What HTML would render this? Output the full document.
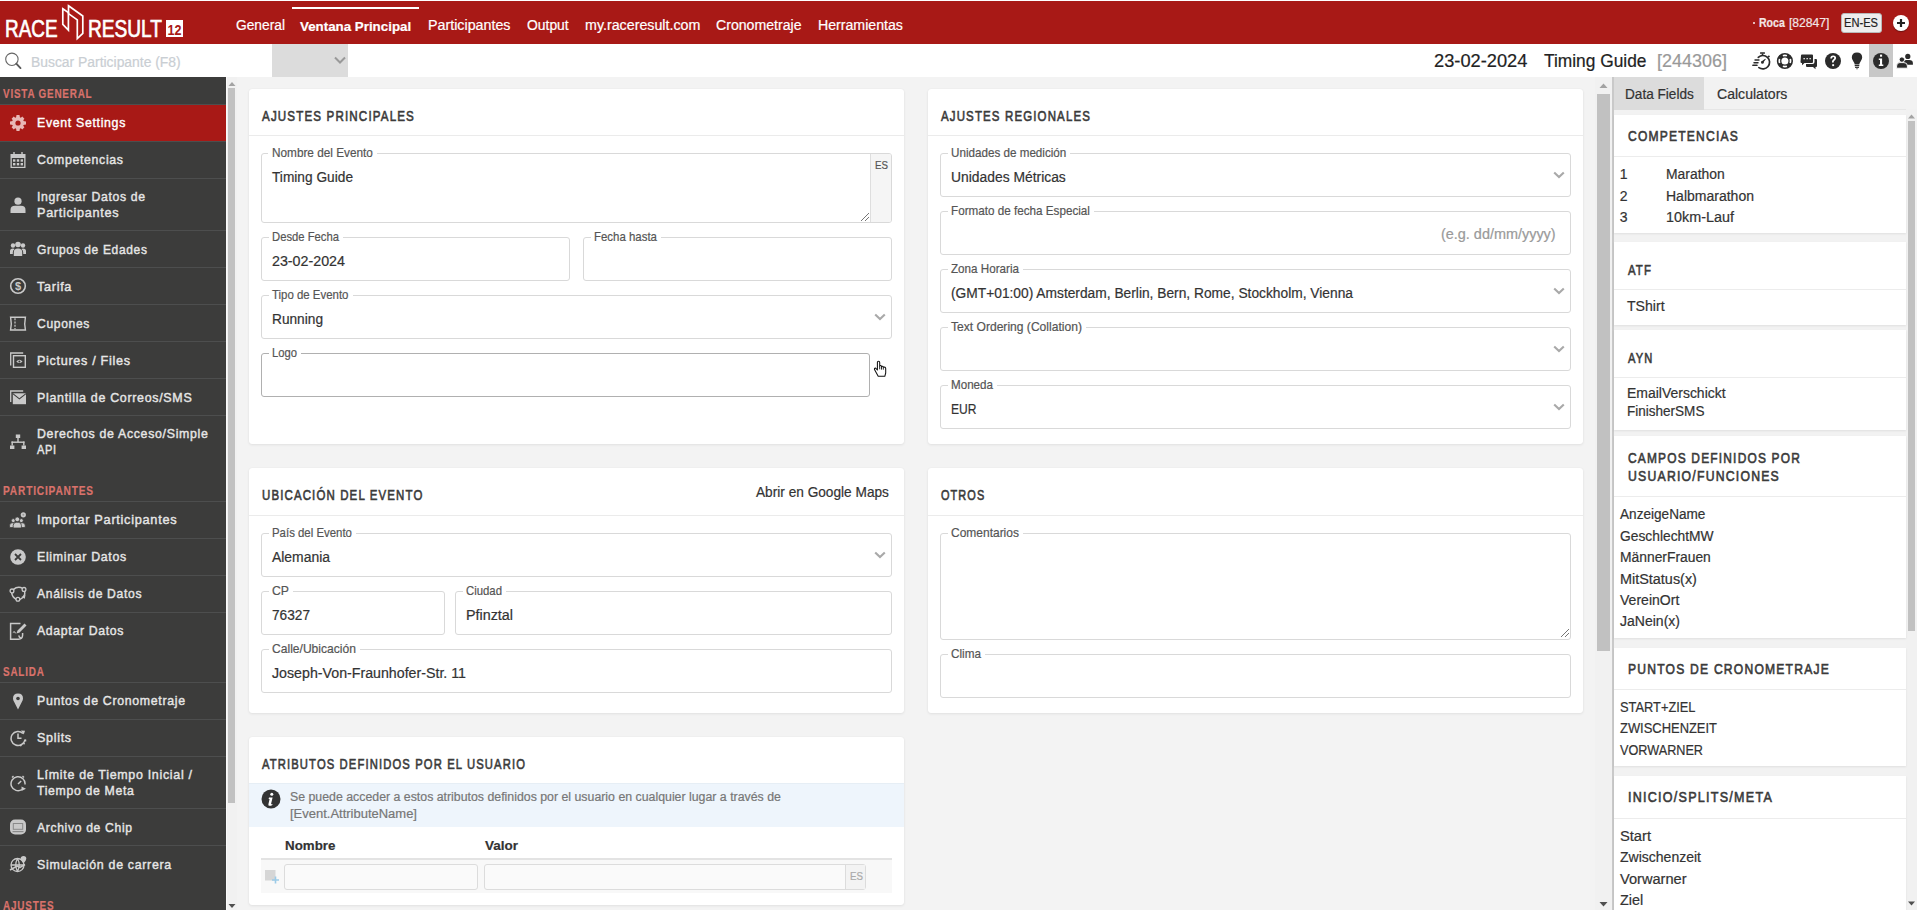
<!DOCTYPE html>
<html><head><meta charset="utf-8">
<style>
*{box-sizing:border-box;margin:0;padding:0}
html,body{width:1917px;height:910px;overflow:hidden;background:#fff;font-family:"Liberation Sans",sans-serif;color:#333}
.a{position:absolute}
.t{position:absolute;white-space:nowrap;line-height:1;transform-origin:0 0;z-index:1;-webkit-text-stroke:0.2px currentColor}
#hdr{position:absolute;left:0;top:1px;width:1917px;height:43px;background:#a81916}
#tb{position:absolute;left:0;top:44px;width:1917px;height:33px;background:#fff}
#side{position:absolute;left:0;top:77px;width:226px;height:833px;background:#3c3c3b;overflow:hidden}
#main{position:absolute;left:226px;top:77px;width:1386px;height:833px;background:#f3f3f3}
#rp{position:absolute;left:1612px;top:77px;width:305px;height:833px;background:#f2f2f2;border-left:2px solid #c9c9c9}
.nav{color:#fff;font-size:14px}
.sh{color:#d9726b;font-weight:bold;font-size:11.5px}
.si{position:absolute;left:0;width:226px;border-top:1px solid #4d4e4e}
.st{color:#e6e6e6;font-size:12.8px;font-weight:bold}
.card{position:absolute;background:#fff;border-radius:3px;box-shadow:0 1px 3px rgba(0,0,0,0.07),0 0 1px rgba(0,0,0,0.08)}
.ch{position:absolute;left:0;right:0;top:0;height:47px;border-bottom:1px solid #eaeaea}
.ct{color:#3b3b3b;font-weight:bold;font-size:13px;letter-spacing:1px}
.fb{position:absolute;border:1px solid #d9d9d9;border-radius:3px;background:#fff}
.lb{position:absolute;background:#fff;color:#555;font-size:12px;padding:0 3px;line-height:13px;white-space:nowrap}
.val{color:#333;font-size:13.7px}
</style></head><body>
<div id="main"></div>
<div class="a" style="left:1595px;top:77px;width:17px;height:833px;background:#f1f1f1"></div>
<div class="a" style="left:1597px;top:94px;width:13px;height:557px;background:#c1c1c1"></div>
<svg class="a" style="left:1598px;top:82px" width="11" height="8"><path d="M1.5 6h8l-4-4.5z" fill="#a3a3a3"/></svg>
<svg class="a" style="left:1598px;top:900px" width="11" height="8"><path d="M1.5 2h8l-4 4.5z" fill="#505050"/></svg>
<div class="card" style="left:249px;top:89px;width:655px;height:355px"></div>
<div class="a" style="left:249px;top:135px;width:655px;height:1px;background:#ebebeb"></div>
<div class="t" style="left:262.0px;top:109px;font-size:14px;color:#3b3b3b;-webkit-text-stroke:0.6px #3b3b3b;letter-spacing:1.4px;transform:scaleX(0.8268);">AJUSTES PRINCIPALES</div>
<div class="fb" style="left:261px;top:153px;width:631px;height:70px"></div>
<div class="a" style="left:870px;top:154px;width:21px;height:68px;background:#f5f5f5;border-left:1px solid #dedede;border-radius:0 2px 2px 0"></div>
<div class="t" style="left:874.6px;top:160px;font-size:10.5px;color:#555;transform:scaleX(0.9281);">ES</div>
<svg class="a" style="left:860px;top:212px" width="10" height="10"><path d="M1 9l8-8M5 9l4-4" stroke="#666" stroke-width="0.9"/></svg>
<div class="a" style="left:268px;top:151px;width:109px;height:4px;background:#fff"></div>
<div class="t" style="left:271.8px;top:147px;font-size:12.4px;color:#555;transform:scaleX(0.9515);">Nombre del Evento</div>
<div class="t" style="left:272.0px;top:170px;font-size:14px;color:#333;transform:scaleX(0.9790);">Timing Guide</div>
<div class="fb" style="left:261px;top:237px;width:309px;height:44px;border-color:#d9d9d9"></div>
<div class="a" style="left:269px;top:235px;width:74px;height:4px;background:#fff"></div>
<div class="t" style="left:271.8px;top:231px;font-size:12.4px;color:#555;transform:scaleX(0.9084);">Desde Fecha</div>
<div class="t" style="left:272.0px;top:254px;font-size:14px;color:#333;transform:scaleX(1.0193);">23-02-2024</div>
<div class="fb" style="left:583px;top:237px;width:309px;height:44px;border-color:#d9d9d9"></div>
<div class="a" style="left:591px;top:235px;width:70px;height:4px;background:#fff"></div>
<div class="t" style="left:593.8px;top:231px;font-size:12.4px;color:#555;transform:scaleX(0.9232);">Fecha hasta</div>
<div class="fb" style="left:261px;top:295px;width:631px;height:44px;border-color:#d9d9d9"></div>
<div class="a" style="left:269px;top:293px;width:83.5px;height:4px;background:#fff"></div>
<div class="t" style="left:271.8px;top:289px;font-size:12.4px;color:#555;transform:scaleX(0.9222);">Tipo de Evento</div>
<div class="t" style="left:272.0px;top:312px;font-size:14px;color:#333;transform:scaleX(0.9779);">Running</div>
<svg class="a" style="left:873.5px;top:313px" width="12" height="8" viewBox="0 0 12 8"><path d="M1.2 1.5l4.8 4.6 4.8-4.6" fill="none" stroke="#a9a9a9" stroke-width="2.1"/></svg>
<div class="fb" style="left:261px;top:353px;width:609px;height:44px;border-color:#b0b0b0"></div>
<div class="a" style="left:269px;top:351px;width:32px;height:4px;background:#fff"></div>
<div class="t" style="left:271.8px;top:347px;font-size:12.4px;color:#555;transform:scaleX(0.9063);">Logo</div>
<svg class="a" style="left:873px;top:360px" width="16" height="19" viewBox="0 0 16 19"><path d="M4.4 10V2.4Q4.4 1.2 5.55 1.2Q6.7 1.2 6.7 2.4V6Q7.6 5.1 8.5 6V6.6Q9.4 5.8 10.3 6.9V7.3Q12.6 6.6 12.7 8.6V13L11.8 16.3H5.2L1.5 9.6Q1.2 8 2.6 8.1z" fill="#fff" stroke="#111" stroke-width="1.05" stroke-linejoin="round"/><path d="M6.7 6v3.3M8.5 6.6v3M10.3 7.3v2.4" stroke="#111" stroke-width="0.9"/></svg>
<div class="card" style="left:928px;top:89px;width:655px;height:355px"></div>
<div class="a" style="left:928px;top:135px;width:655px;height:1px;background:#ebebeb"></div>
<div class="t" style="left:941.0px;top:109px;font-size:14px;color:#3b3b3b;-webkit-text-stroke:0.6px #3b3b3b;letter-spacing:1.4px;transform:scaleX(0.8191);">AJUSTES REGIONALES</div>
<div class="fb" style="left:940px;top:153px;width:631px;height:44px;border-color:#d9d9d9"></div>
<div class="a" style="left:948px;top:151px;width:122.4px;height:4px;background:#fff"></div>
<div class="t" style="left:950.8px;top:147px;font-size:12.4px;color:#555;transform:scaleX(0.9405);">Unidades de medición</div>
<div class="t" style="left:951.0px;top:170px;font-size:14px;color:#333;transform:scaleX(0.9902);">Unidades Métricas</div>
<svg class="a" style="left:1552.5px;top:171px" width="12" height="8" viewBox="0 0 12 8"><path d="M1.2 1.5l4.8 4.6 4.8-4.6" fill="none" stroke="#a9a9a9" stroke-width="2.1"/></svg>
<div class="fb" style="left:940px;top:211px;width:631px;height:44px;border-color:#d9d9d9"></div>
<div class="a" style="left:948px;top:209px;width:146px;height:4px;background:#fff"></div>
<div class="t" style="left:950.8px;top:205px;font-size:12.4px;color:#555;transform:scaleX(0.9424);">Formato de fecha Especial</div>
<div class="t" style="left:1440.5px;top:228px;font-size:13.9px;color:#9a9a9a;transform:scaleX(1.0385);">(e.g. dd/mm/yyyy)</div>
<div class="fb" style="left:940px;top:269px;width:631px;height:44px;border-color:#d9d9d9"></div>
<div class="a" style="left:948px;top:267px;width:75px;height:4px;background:#fff"></div>
<div class="t" style="left:950.8px;top:263px;font-size:12.4px;color:#555;transform:scaleX(0.9396);">Zona Horaria</div>
<div class="t" style="left:951.0px;top:286px;font-size:14px;color:#333;transform:scaleX(0.9837);">(GMT+01:00) Amsterdam, Berlin, Bern, Rome, Stockholm, Vienna</div>
<svg class="a" style="left:1552.5px;top:287px" width="12" height="8" viewBox="0 0 12 8"><path d="M1.2 1.5l4.8 4.6 4.8-4.6" fill="none" stroke="#a9a9a9" stroke-width="2.1"/></svg>
<div class="fb" style="left:940px;top:327px;width:631px;height:44px;border-color:#d9d9d9"></div>
<div class="a" style="left:948px;top:325px;width:138px;height:4px;background:#fff"></div>
<div class="t" style="left:950.8px;top:321px;font-size:12.4px;color:#555;transform:scaleX(0.9748);">Text Ordering (Collation)</div>
<svg class="a" style="left:1552.5px;top:345px" width="12" height="8" viewBox="0 0 12 8"><path d="M1.2 1.5l4.8 4.6 4.8-4.6" fill="none" stroke="#a9a9a9" stroke-width="2.1"/></svg>
<div class="fb" style="left:940px;top:385px;width:631px;height:44px;border-color:#d9d9d9"></div>
<div class="a" style="left:948px;top:383px;width:49px;height:4px;background:#fff"></div>
<div class="t" style="left:950.8px;top:379px;font-size:12.4px;color:#555;transform:scaleX(0.9372);">Moneda</div>
<div class="t" style="left:951.0px;top:402px;font-size:14px;color:#333;transform:scaleX(0.8627);">EUR</div>
<svg class="a" style="left:1552.5px;top:403px" width="12" height="8" viewBox="0 0 12 8"><path d="M1.2 1.5l4.8 4.6 4.8-4.6" fill="none" stroke="#a9a9a9" stroke-width="2.1"/></svg>
<div class="card" style="left:249px;top:468px;width:655px;height:245px"></div>
<div class="a" style="left:249px;top:515px;width:655px;height:1px;background:#ebebeb"></div>
<div class="t" style="left:262.3px;top:488px;font-size:14px;color:#3b3b3b;-webkit-text-stroke:0.6px #3b3b3b;letter-spacing:1.4px;transform:scaleX(0.8173);">UBICACIÓN DEL EVENTO</div>
<div class="t" style="left:756.1px;top:486px;font-size:13.9px;color:#333;transform:scaleX(0.9837);">Abrir en Google Maps</div>
<div class="fb" style="left:261px;top:533px;width:631px;height:44px;border-color:#d9d9d9"></div>
<div class="a" style="left:269px;top:531px;width:87px;height:4px;background:#fff"></div>
<div class="t" style="left:271.8px;top:527px;font-size:12.4px;color:#555;transform:scaleX(0.9211);">País del Evento</div>
<div class="t" style="left:272.0px;top:550px;font-size:14px;color:#333;transform:scaleX(0.9937);">Alemania</div>
<svg class="a" style="left:873.5px;top:551px" width="12" height="8" viewBox="0 0 12 8"><path d="M1.2 1.5l4.8 4.6 4.8-4.6" fill="none" stroke="#a9a9a9" stroke-width="2.1"/></svg>
<div class="fb" style="left:261px;top:591px;width:184px;height:44px;border-color:#d9d9d9"></div>
<div class="a" style="left:269px;top:589px;width:24px;height:4px;background:#fff"></div>
<div class="t" style="left:271.8px;top:585px;font-size:12.4px;color:#555;transform:scaleX(0.9869);">CP</div>
<div class="t" style="left:272.0px;top:608px;font-size:14px;color:#333;transform:scaleX(0.9761);">76327</div>
<div class="fb" style="left:455px;top:591px;width:437px;height:44px;border-color:#d9d9d9"></div>
<div class="a" style="left:463px;top:589px;width:43px;height:4px;background:#fff"></div>
<div class="t" style="left:465.8px;top:585px;font-size:12.4px;color:#555;transform:scaleX(0.9161);">Ciudad</div>
<div class="t" style="left:466.0px;top:608px;font-size:14px;color:#333;transform:scaleX(1.0237);">Pfinztal</div>
<div class="fb" style="left:261px;top:649px;width:631px;height:44px;border-color:#d9d9d9"></div>
<div class="a" style="left:269px;top:647px;width:91px;height:4px;background:#fff"></div>
<div class="t" style="left:271.8px;top:643px;font-size:12.4px;color:#555;transform:scaleX(0.9750);">Calle/Ubicación</div>
<div class="t" style="left:272.0px;top:666px;font-size:14px;color:#333;transform:scaleX(1.0147);">Joseph-Von-Fraunhofer-Str. 11</div>
<div class="card" style="left:928px;top:468px;width:655px;height:245px"></div>
<div class="a" style="left:928px;top:515px;width:655px;height:1px;background:#ebebeb"></div>
<div class="t" style="left:941.2px;top:488px;font-size:14px;color:#3b3b3b;-webkit-text-stroke:0.6px #3b3b3b;letter-spacing:1.4px;transform:scaleX(0.7802);">OTROS</div>
<div class="fb" style="left:940px;top:533px;width:631px;height:107px;border-color:#d9d9d9"></div>
<div class="a" style="left:948px;top:531px;width:75px;height:4px;background:#fff"></div>
<div class="t" style="left:950.8px;top:527px;font-size:12.4px;color:#555;transform:scaleX(0.9673);">Comentarios</div>
<svg class="a" style="left:1560px;top:628px" width="10" height="10"><path d="M1 9l8-8M5 9l4-4" stroke="#666" stroke-width="0.9"/></svg>
<div class="fb" style="left:940px;top:654px;width:631px;height:44px;border-color:#d9d9d9"></div>
<div class="a" style="left:948px;top:652px;width:37px;height:4px;background:#fff"></div>
<div class="t" style="left:950.8px;top:648px;font-size:12.4px;color:#555;transform:scaleX(0.9466);">Clima</div>
<div class="card" style="left:249px;top:737px;width:655px;height:168px"></div>
<div class="t" style="left:262.0px;top:757px;font-size:14px;color:#3b3b3b;-webkit-text-stroke:0.6px #3b3b3b;letter-spacing:1.4px;transform:scaleX(0.8026);">ATRIBUTOS DEFINIDOS POR EL USUARIO</div>
<div class="a" style="left:249px;top:783px;width:655px;height:44px;background:#eef5fc;border-top:1px solid #e6eef5"></div>
<svg class="a" style="left:261px;top:789px" width="20" height="20" viewBox="0 0 20 20"><circle cx="10" cy="10" r="9.5" fill="#333"/><circle cx="10.8" cy="5.3" r="1.5" fill="#fff"/><path d="M8 8.6h3.6l-1.5 6.2q-.1.6.6.4l.8-.3-.2 1q-1.4.9-2.7.9-1.6-.1-1.2-1.6l1.2-5.2-1 .1z" fill="#fff"/></svg>
<div class="t" style="left:289.7px;top:791px;font-size:12.3px;color:#777;transform:scaleX(1.0029);">Se puede acceder a estos atributos definidos por el usuario en cualquier lugar a través de</div>
<div class="t" style="left:289.7px;top:808px;font-size:12.3px;color:#777;transform:scaleX(1.0555);">[Event.AttributeName]</div>
<div class="t" style="left:285.4px;top:839px;font-size:13.5px;color:#333;font-weight:bold;transform:scaleX(0.9881);">Nombre</div>
<div class="t" style="left:484.8px;top:839px;font-size:13.5px;color:#333;font-weight:bold;transform:scaleX(0.9994);">Valor</div>
<div class="a" style="left:261px;top:858px;width:631px;height:2px;background:#e3e3e3"></div>
<div class="a" style="left:261px;top:860px;width:631px;height:33px;background:#f8f8f8"></div>
<div class="a" style="left:284px;top:864px;width:194px;height:26px;background:#fafafa;border:1px solid #dcdcdc;border-radius:3px"></div>
<div class="a" style="left:484px;top:864px;width:382px;height:26px;background:#fafafa;border:1px solid #dcdcdc;border-radius:3px"></div>
<div class="a" style="left:845px;top:865px;width:20px;height:24px;background:#f3f3f3;border-left:1px solid #dcdcdc"></div>
<div class="t" style="left:849.5px;top:871px;font-size:10.5px;color:#aaa;transform:scaleX(0.9281);">ES</div>
<svg class="a" style="left:264px;top:869px" width="16" height="16" viewBox="0 0 16 16"><rect x="1" y="1" width="10.5" height="10.5" fill="#d6d6d6"/><path d="M11.5 7.5v7M8 11h7" stroke="#9ccbe8" stroke-width="1.6"/></svg>
<div id="rp"></div>
<div class="a" style="left:1614px;top:77px;width:90px;height:33px;background:#dcdcdc"></div>
<div class="a" style="left:1704px;top:109px;width:213px;height:1px;background:#e6e6e6"></div>
<div class="t" style="left:1624.9px;top:87px;font-size:14px;color:#333;transform:scaleX(0.9716);">Data Fields</div>
<div class="t" style="left:1717.0px;top:87px;font-size:14px;color:#333;transform:scaleX(1.0053);">Calculators</div>
<div class="a" style="left:1906px;top:109px;width:11px;height:801px;background:#f1f1f1"></div>
<div class="a" style="left:1908px;top:121px;width:6.5px;height:510px;background:#c1c1c1"></div>
<svg class="a" style="left:1907px;top:113px" width="9" height="7"><path d="M1 5.5h7l-3.5-4z" fill="#a3a3a3"/></svg>
<svg class="a" style="left:1907px;top:900px" width="9" height="7"><path d="M1 1.5h7l-3.5 4z" fill="#505050"/></svg>
<div class="a" style="left:1614px;top:115px;width:292px;height:118px;background:#fff;box-shadow:0 1px 2px rgba(0,0,0,0.08)"></div>
<div class="a" style="left:1614px;top:156px;width:292px;height:1px;background:#ececec"></div>
<div class="t" style="left:1627.7px;top:129px;font-size:14px;color:#3b3b3b;-webkit-text-stroke:0.6px #3b3b3b;letter-spacing:1.4px;transform:scaleX(0.8617);">COMPETENCIAS</div>
<div class="t" style="left:1619.8px;top:167px;font-size:14px;color:#333;">1</div>
<div class="t" style="left:1666.0px;top:167px;font-size:14px;color:#333;transform:scaleX(0.9924);">Marathon</div>
<div class="t" style="left:1619.8px;top:189px;font-size:14px;color:#333;">2</div>
<div class="t" style="left:1666.0px;top:189px;font-size:14px;color:#333;transform:scaleX(1.0007);">Halbmarathon</div>
<div class="t" style="left:1619.8px;top:210px;font-size:14px;color:#333;">3</div>
<div class="t" style="left:1666.0px;top:210px;font-size:14px;color:#333;transform:scaleX(1.0265);">10km-Lauf</div>
<div class="a" style="left:1614px;top:242px;width:292px;height:83px;background:#fff;box-shadow:0 1px 2px rgba(0,0,0,0.08)"></div>
<div class="a" style="left:1614px;top:289px;width:292px;height:1px;background:#ececec"></div>
<div class="t" style="left:1627.7px;top:263px;font-size:14px;color:#3b3b3b;-webkit-text-stroke:0.6px #3b3b3b;letter-spacing:1.4px;transform:scaleX(0.8107);">ATF</div>
<div class="t" style="left:1626.8px;top:299px;font-size:14px;color:#333;transform:scaleX(1.0070);">TShirt</div>
<div class="a" style="left:1614px;top:330px;width:292px;height:100px;background:#fff;box-shadow:0 1px 2px rgba(0,0,0,0.08)"></div>
<div class="a" style="left:1614px;top:377px;width:292px;height:1px;background:#ececec"></div>
<div class="t" style="left:1627.7px;top:351px;font-size:14px;color:#3b3b3b;-webkit-text-stroke:0.6px #3b3b3b;letter-spacing:1.4px;transform:scaleX(0.7950);">AYN</div>
<div class="t" style="left:1626.8px;top:386px;font-size:14px;color:#333;transform:scaleX(0.9979);">EmailVerschickt</div>
<div class="t" style="left:1626.8px;top:404px;font-size:14px;color:#333;transform:scaleX(0.9659);">FinisherSMS</div>
<div class="a" style="left:1614px;top:436px;width:292px;height:202px;background:#fff;box-shadow:0 1px 2px rgba(0,0,0,0.08)"></div>
<div class="a" style="left:1614px;top:496px;width:292px;height:1px;background:#ececec"></div>
<div class="t" style="left:1627.7px;top:451px;font-size:14px;color:#3b3b3b;-webkit-text-stroke:0.6px #3b3b3b;letter-spacing:1.4px;transform:scaleX(0.8521);">CAMPOS DEFINIDOS POR</div>
<div class="t" style="left:1627.7px;top:469px;font-size:14px;color:#3b3b3b;-webkit-text-stroke:0.6px #3b3b3b;letter-spacing:1.4px;transform:scaleX(0.8739);">USUARIO/FUNCIONES</div>
<div class="t" style="left:1619.8px;top:507px;font-size:14px;color:#333;transform:scaleX(0.9711);">AnzeigeName</div>
<div class="t" style="left:1619.8px;top:529px;font-size:14px;color:#333;transform:scaleX(0.9862);">GeschlechtMW</div>
<div class="t" style="left:1619.8px;top:550px;font-size:14px;color:#333;transform:scaleX(0.9888);">MännerFrauen</div>
<div class="t" style="left:1619.8px;top:572px;font-size:14px;color:#333;transform:scaleX(1.0298);">MitStatus(x)</div>
<div class="t" style="left:1619.8px;top:593px;font-size:14px;color:#333;transform:scaleX(1.0027);">VereinOrt</div>
<div class="t" style="left:1619.8px;top:614px;font-size:14px;color:#333;transform:scaleX(1.0016);">JaNein(x)</div>
<div class="a" style="left:1614px;top:648px;width:292px;height:118px;background:#fff;box-shadow:0 1px 2px rgba(0,0,0,0.08)"></div>
<div class="a" style="left:1614px;top:689px;width:292px;height:1px;background:#ececec"></div>
<div class="t" style="left:1627.7px;top:662px;font-size:14px;color:#3b3b3b;-webkit-text-stroke:0.6px #3b3b3b;letter-spacing:1.4px;transform:scaleX(0.8649);">PUNTOS DE CRONOMETRAJE</div>
<div class="t" style="left:1619.8px;top:700px;font-size:14px;color:#333;transform:scaleX(0.9169);">START+ZIEL</div>
<div class="t" style="left:1619.8px;top:721px;font-size:14px;color:#333;transform:scaleX(0.9238);">ZWISCHENZEIT</div>
<div class="t" style="left:1619.8px;top:743px;font-size:14px;color:#333;transform:scaleX(0.9043);">VORWARNER</div>
<div class="a" style="left:1614px;top:776px;width:292px;height:144px;background:#fff;box-shadow:0 1px 2px rgba(0,0,0,0.08)"></div>
<div class="a" style="left:1614px;top:818px;width:292px;height:1px;background:#ececec"></div>
<div class="t" style="left:1627.7px;top:790px;font-size:14px;color:#3b3b3b;-webkit-text-stroke:0.6px #3b3b3b;letter-spacing:1.4px;transform:scaleX(0.8959);">INICIO/SPLITS/META</div>
<div class="t" style="left:1619.8px;top:829px;font-size:14px;color:#333;transform:scaleX(1.0485);">Start</div>
<div class="t" style="left:1619.8px;top:850px;font-size:14px;color:#333;transform:scaleX(1.0010);">Zwischenzeit</div>
<div class="t" style="left:1619.8px;top:872px;font-size:14px;color:#333;transform:scaleX(1.0437);">Vorwarner</div>
<div class="t" style="left:1619.8px;top:893px;font-size:14px;color:#333;transform:scaleX(1.0284);">Ziel</div>
<div id="hdr">
<svg class="a" style="left:0;top:-1px" width="200" height="44" viewBox="0 0 200 44">
<text x="5" y="37" fill="#fff" font-family="Liberation Sans" font-size="23.5" stroke="#fff" stroke-width="0.7" textLength="52.5" lengthAdjust="spacingAndGlyphs">RACE</text>
<g fill="none" stroke="#fff" stroke-width="1.7" stroke-linejoin="miter">
<polygon points="62.8,8.8 68.4,12.6 68.4,30.2 62.8,24.4"/>
<polygon points="68.5,5.8 82.8,16 82.8,33.4 77.3,38.6 77.3,19.9 68.5,13.6"/>
</g>
<text x="88" y="37" fill="#fff" font-family="Liberation Sans" font-size="23.5" stroke="#fff" stroke-width="0.7" textLength="74" lengthAdjust="spacingAndGlyphs">RESULT</text>
<rect x="166" y="20" width="17" height="17" fill="#fff"/>
<text x="167.5" y="34.5" fill="#a81916" font-family="Liberation Sans" font-size="15" font-weight="bold" textLength="14" lengthAdjust="spacingAndGlyphs">12</text>
</svg>
<div class="a" style="left:292px;top:6px;width:127px;height:2px;background:#fff"></div>
<div class="t" style="left:235.7px;top:17px;font-size:14px;color:#fff;transform:scaleX(0.9838);">General</div>
<div class="t" style="left:300.4px;top:19px;font-size:13.6px;color:#fff;font-weight:bold;transform:scaleX(0.9808);">Ventana Principal</div>
<div class="t" style="left:427.7px;top:17px;font-size:14px;color:#fff;transform:scaleX(1.0194);">Participantes</div>
<div class="t" style="left:526.5px;top:17px;font-size:14px;color:#fff;transform:scaleX(0.9922);">Output</div>
<div class="t" style="left:584.6px;top:17px;font-size:14px;color:#fff;transform:scaleX(1.0183);">my.raceresult.com</div>
<div class="t" style="left:716.4px;top:17px;font-size:14px;color:#fff;transform:scaleX(1.0081);">Cronometraje</div>
<div class="t" style="left:818.3px;top:17px;font-size:14px;color:#fff;transform:scaleX(1.0103);">Herramientas</div>
<div class="t" style="left:1759.0px;top:16px;font-size:12.6px;color:#f3e6e6;font-weight:bold;transform:scaleX(0.8373);">Roca</div>
<div class="t" style="left:1788.5px;top:16px;font-size:12.6px;color:#f3e6e6;transform:scaleX(0.9634);">[82847]</div>
<div class="t" style="left:1844.3px;top:16px;font-size:12.4px;color:#222;transform:scaleX(0.8971);">EN-ES</div>
<div class="a" style="left:1753px;top:21px;width:2px;height:2px;background:#e6b9b8"></div>
<div class="a" style="left:1840.5px;top:11.5px;width:41px;height:20px;background:#eeeeee;border:1px solid #b9b9b9;border-radius:3px"></div>
<div class="a" style="left:1893px;top:14px;width:16px;height:16px;border-radius:50%;background:#fff;box-shadow:0 1px 1px rgba(0,0,0,.35)"></div>
<svg class="a" style="left:1895px;top:16px" width="12" height="12" viewBox="0 0 12 12"><path d="M6 2v8M2 6h8" stroke="#222" stroke-width="2.2"/></svg>
</div>
<div id="tb">
<div class="t" style="left:30.7px;top:11px;font-size:14px;color:#c9ced3;transform:scaleX(0.9917);">Buscar Participante (F8)</div>
<div class="t" style="left:1434.2px;top:9px;font-size:17.8px;color:#222;transform:scaleX(1.0268);">23-02-2024</div>
<div class="t" style="left:1544.4px;top:9px;font-size:17.8px;color:#222;transform:scaleX(0.9753);">Timing Guide</div>
<div class="t" style="left:1657.0px;top:9px;font-size:17.8px;color:#999;transform:scaleX(1.0103);">[244306]</div>
<svg class="a" style="left:0;top:0" width="30" height="33" viewBox="0 44 30 33"><circle cx="11.9" cy="59.3" r="6.2" fill="none" stroke="#666" stroke-width="1.1"/><path d="M16.3 63.7l4.2 4.4" stroke="#5a5a5a" stroke-width="1.9" stroke-linecap="round"/></svg>
<div class="a" style="left:272px;top:0;width:76px;height:33px;background:#dcdcdc"></div>
<svg class="a" style="left:334px;top:12px" width="12" height="8" viewBox="0 0 12 8"><path d="M1 1.5l5 5 5-5" fill="none" stroke="#999" stroke-width="2"/></svg>
<div class="a" style="left:1869px;top:0;width:24px;height:33px;background:#c8c8c8"></div>
<svg class="a" style="left:1740px;top:0" width="177" height="33" viewBox="1740 44 177 33">
<g fill="#2b2b2b">
<!-- stopwatch -->
<path d="M1758.3 57.3A6.7 6.7 0 1 1 1758.9 67.6" fill="none" stroke="#2b2b2b" stroke-width="1.7" stroke-linecap="round"/>
<rect x="1760" y="52.2" width="5" height="1.6" rx="0.5"/>
<rect x="1761.7" y="53.5" width="1.6" height="2.5"/>
<path d="M1767.6 56.6l1.3-1.3 1.1 1.1-1.3 1.3z"/>
<path d="M1761.4 61.6l3.9-2.9 0.5 0.5-2.9 3.9z"/>
<circle cx="1762.4" cy="62.4" r="1.4"/>
<rect x="1754.3" y="59.2" width="5.4" height="1.5" rx="0.7"/>
<rect x="1753.3" y="61.9" width="5.4" height="1.5" rx="0.7"/>
<rect x="1752.2" y="64.6" width="5.5" height="1.5" rx="0.7"/>
<!-- lifebuoy -->
<circle cx="1784.9" cy="61" r="7.3" fill="none" stroke="#2b2b2b" stroke-width="1.6"/>
<circle cx="1784.9" cy="61" r="4.2" fill="none" stroke="#2b2b2b" stroke-width="1.3"/>
<path d="M1790.31 63.08A5.8 5.8 0 0 1 1786.98 66.41M1782.82 66.41A5.8 5.8 0 0 1 1779.49 63.08M1779.49 58.92A5.8 5.8 0 0 1 1782.82 55.59M1786.98 55.59A5.8 5.8 0 0 1 1790.31 58.92" fill="none" stroke="#2b2b2b" stroke-width="3.4"/>
<!-- chat -->
<path d="M1801 55.5q0-1 1-1h10q1 0 1 1v6.5q0 1-1 1h-7.5l-2.5 2.2v-2.2h-0.5q-1 0-1-1z"/>
<path d="M1814.5 59h1.5q1 0 1 1v6q0 1-1 1h-0.5v2.2l-2.5-2.2h-6q-1 0-1-1v-2h6.5q2 0 2-2z"/>
<g fill="#fff"><rect x="1803.5" y="58" width="1.3" height="1.3"/><rect x="1806.5" y="58" width="1.3" height="1.3"/><rect x="1809.5" y="58" width="1.3" height="1.3"/></g>
<!-- question -->
<circle cx="1833" cy="61" r="8"/>
<path d="M1830.3 58.6q0-3.2 2.9-3.2q2.9 0 2.9 2.6q0 1.5-1.5 2.4q-0.9 0.6-0.9 1.7v0.5h-1.7v-0.8q0-1.5 1.2-2.3q1.1-0.7 1.1-1.5q0-1.1-1.1-1.1q-1.2 0-1.2 1.7z" fill="#fff"/>
<rect x="1832.2" y="64.2" width="1.9" height="1.9" fill="#fff"/>
<!-- bulb -->
<path d="M1857 52.5q5 0 5.2 4.8q0 2.2-1.6 4.2q-1.2 1.5-1.3 3h-4.6q-0.1-1.5-1.3-3q-1.6-2-1.6-4.2q0.2-4.8 5.2-4.8z"/>
<rect x="1854.7" y="65" width="4.6" height="1.2"/>
<rect x="1855" y="66.8" width="4" height="1.1"/>
<path d="M1855.8 68.5h2.4l-1.2 1.1z"/>
<!-- info -->
<circle cx="1881" cy="61" r="8"/>
<g fill="#fff"><rect x="1880" y="54.6" width="2.1" height="2.1"/><path d="M1878.8 58.6h3.3v6h1.2v1.5h-4.5v-1.5h1.2v-4.5h-1.2z"/></g>
<!-- users -->
<circle cx="1907.8" cy="56.4" r="2.6"/>
<path d="M1903.5 64.8v-1.8q0-2.9 2.9-2.9h2.8q3.7 0 3.7 2.9v1.8z"/>
<circle cx="1901.9" cy="59.6" r="2.7" stroke="#fff" stroke-width="0.9"/>
<path d="M1896.6 68.2v-2.2q0-3.4 3.2-3.4h4.2q3.4 0 3.4 3.4v2.2z" stroke="#fff" stroke-width="0.9"/>
</g></svg>
</div>

<div id="side">
<div class="t" style="left:3.3px;top:11px;font-size:12.4px;color:#d9726b;font-weight:bold;letter-spacing:1.0px;transform:scaleX(0.7976);">VISTA GENERAL</div>
<div class="si" style="top:27px;height:37px;background:#a81916;"></div>
<div class="t" style="left:36.6px;top:40px;font-size:12.8px;color:#fff;letter-spacing:0.7px;transform:scaleX(0.9638);-webkit-text-stroke:0.4px #fff;">Event Settings</div>
<svg class="a" style="left:9px;top:37.0px" width="18" height="18" viewBox="0 0 18 18"><g fill="#e8b8b6"><circle cx="9" cy="9" r="6"/><path d="M7.5 1h3l.5 3h-4zM7.5 17h3l.5-3h-4zM1 7.5v3l3 .5v-4zM17 7.5v3l-3 .5v-4z"/><path d="M2.6 4.7l2.1-2.1 2.3 1.8-2.6 2.6zM13.3 15.4l2.1-2.1-1.8-2.3-2.6 2.6zM2.6 13.3l2.1 2.1 2.3-1.8-2.6-2.6zM13.3 2.6l2.1 2.1-1.8 2.3-2.6-2.6z"/></g><circle cx="9" cy="9" r="2.6" fill="#a81916"/></svg>
<div class="si" style="top:64px;height:37px;"></div>
<div class="t" style="left:36.6px;top:77px;font-size:12.8px;color:#e6e6e6;letter-spacing:0.7px;transform:scaleX(0.9610);-webkit-text-stroke:0.4px #e6e6e6;">Competencias</div>
<svg class="a" style="left:9px;top:74.0px" width="18" height="18" viewBox="0 0 18 18"><rect x="1.5" y="3" width="15" height="14" fill="#c9c9c9"/><rect x="2.8" y="7" width="12.4" height="8.8" fill="#3c3c3b"/><g fill="#c9c9c9"><rect x="4" y="8.3" width="2.4" height="2.4"/><rect x="7.8" y="8.3" width="2.4" height="2.4"/><rect x="11.6" y="8.3" width="2.4" height="2.4"/><rect x="4" y="12" width="2.4" height="2.4"/><rect x="7.8" y="12" width="2.4" height="2.4"/><rect x="11.6" y="12" width="2.4" height="2.4"/><rect x="4.3" y="1" width="1.4" height="3"/><rect x="12.3" y="1" width="1.4" height="3"/></g></svg>
<div class="si" style="top:101px;height:52px;"></div>
<div class="t" style="left:36.6px;top:114px;font-size:12.8px;color:#e6e6e6;letter-spacing:0.7px;transform:scaleX(0.9574);-webkit-text-stroke:0.4px #e6e6e6;">Ingresar Datos de</div>
<div class="t" style="left:36.6px;top:130px;font-size:12.8px;color:#e6e6e6;letter-spacing:0.7px;transform:scaleX(0.9892);-webkit-text-stroke:0.4px #e6e6e6;">Participantes</div>
<svg class="a" style="left:9px;top:118.5px" width="18" height="18" viewBox="0 0 18 18"><g fill="#c9c9c9"><circle cx="9" cy="5.2" r="3.6"/><path d="M1.5 17v-3q0-4.2 4.5-4.2h6q4.5 0 4.5 4.2v3z"/></g></svg>
<div class="si" style="top:153px;height:37px;"></div>
<div class="t" style="left:36.6px;top:167px;font-size:12.8px;color:#e6e6e6;letter-spacing:0.7px;transform:scaleX(0.9378);-webkit-text-stroke:0.4px #e6e6e6;">Grupos de Edades</div>
<svg class="a" style="left:9px;top:163.0px" width="18" height="18" viewBox="0 0 18 18"><g fill="#c9c9c9"><circle cx="9" cy="4.5" r="2.8"/><circle cx="4" cy="5.5" r="2.2"/><circle cx="14" cy="5.5" r="2.2"/><path d="M4.8 16v-4q0-3.5 4.2-3.5t4.2 3.5v4z"/><path d="M1 14v-3q0-2.5 3-2.5 1 0 1.6.4-1.8 1.3-1.8 3.6v1.5z"/><path d="M17 14v-3q0-2.5-3-2.5-1 0-1.6.4 1.8 1.3 1.8 3.6v1.5z"/></g></svg>
<div class="si" style="top:190px;height:37px;"></div>
<div class="t" style="left:36.6px;top:204px;font-size:12.8px;color:#e6e6e6;letter-spacing:0.7px;transform:scaleX(0.9887);-webkit-text-stroke:0.4px #e6e6e6;">Tarifa</div>
<svg class="a" style="left:9px;top:200.0px" width="18" height="18" viewBox="0 0 18 18"><circle cx="9" cy="9" r="7.3" fill="none" stroke="#c9c9c9" stroke-width="1.6"/><text x="9" y="13" text-anchor="middle" font-family="Liberation Sans" font-weight="bold" font-size="11" fill="#c9c9c9">$</text></svg>
<div class="si" style="top:227px;height:37px;"></div>
<div class="t" style="left:36.6px;top:241px;font-size:12.8px;color:#e6e6e6;letter-spacing:0.7px;transform:scaleX(0.9441);-webkit-text-stroke:0.4px #e6e6e6;">Cupones</div>
<svg class="a" style="left:9px;top:237.0px" width="18" height="18" viewBox="0 0 18 18"><path d="M1.6 3.2H16.4Q15.1 9.6 16.4 16H1.6Q2.9 9.6 1.6 3.2z" fill="none" stroke="#c9c9c9" stroke-width="1.4"/><path d="M6 4.2v11" stroke="#c9c9c9" stroke-width="1.2" stroke-dasharray="2 1.3"/></svg>
<div class="si" style="top:264px;height:37px;"></div>
<div class="t" style="left:36.6px;top:278px;font-size:12.8px;color:#e6e6e6;letter-spacing:0.7px;transform:scaleX(0.9849);-webkit-text-stroke:0.4px #e6e6e6;">Pictures / Files</div>
<svg class="a" style="left:9px;top:274.0px" width="18" height="18" viewBox="0 0 18 18"><path d="M1.7 14.5v-12.5h12.5" fill="none" stroke="#c9c9c9" stroke-width="1.3"/><rect x="4.5" y="4.7" width="11.8" height="11.6" fill="none" stroke="#c9c9c9" stroke-width="1.4"/><path d="M7.3 10.4q3.1-3.4 6.2 0q-3.1 3.4-6.2 0z" fill="#c9c9c9"/><circle cx="10.4" cy="10.4" r="1" fill="#3c3c3b"/></svg>
<div class="si" style="top:301px;height:37px;"></div>
<div class="t" style="left:36.6px;top:315px;font-size:12.8px;color:#e6e6e6;letter-spacing:0.7px;transform:scaleX(0.9725);-webkit-text-stroke:0.4px #e6e6e6;">Plantilla de Correos/SMS</div>
<svg class="a" style="left:9px;top:311.0px" width="18" height="18" viewBox="0 0 18 18"><path d="M1.7 14v-11h12.5" fill="none" stroke="#c9c9c9" stroke-width="1.3"/><rect x="3.8" y="5.3" width="13.2" height="10.9" fill="#c9c9c9"/><path d="M3.8 5.6l6.6 5.3 6.6-5.3" fill="none" stroke="#3c3c3b" stroke-width="1.1"/></svg>
<div class="si" style="top:338px;height:52px;"></div>
<div class="t" style="left:36.6px;top:351px;font-size:12.8px;color:#e6e6e6;letter-spacing:0.7px;transform:scaleX(0.9663);-webkit-text-stroke:0.4px #e6e6e6;">Derechos de Acceso/Simple</div>
<div class="t" style="left:36.6px;top:367px;font-size:12.8px;color:#e6e6e6;letter-spacing:0.7px;transform:scaleX(0.8666);-webkit-text-stroke:0.4px #e6e6e6;">API</div>
<svg class="a" style="left:9px;top:355.5px" width="18" height="18" viewBox="0 0 18 18"><g fill="#c9c9c9"><rect x="6.8" y="1.5" width="4.4" height="3.5"/><rect x="1" y="12.5" width="4.4" height="3.5"/><rect x="12.6" y="12.5" width="4.4" height="3.5"/><rect x="8.3" y="5" width="1.4" height="4"/><rect x="2.5" y="8.5" width="13" height="1.4"/><rect x="2.5" y="8.5" width="1.4" height="4"/><rect x="14.1" y="8.5" width="1.4" height="4"/></g></svg>
<div class="t" style="left:3.3px;top:408px;font-size:12.4px;color:#d9726b;font-weight:bold;letter-spacing:1.0px;transform:scaleX(0.8194);">PARTICIPANTES</div>
<div class="si" style="top:424px;height:37px;"></div>
<div class="t" style="left:36.6px;top:437px;font-size:12.8px;color:#e6e6e6;letter-spacing:0.7px;transform:scaleX(0.9978);-webkit-text-stroke:0.4px #e6e6e6;">Importar Participantes</div>
<svg class="a" style="left:9px;top:434.0px" width="18" height="18" viewBox="0 0 18 18"><g fill="#c9c9c9" stroke="#3c3c3b" stroke-width="0.8"><circle cx="4.3" cy="9.6" r="2"/><circle cx="12.3" cy="9.6" r="2"/><path d="M0.6 16.6v-2.2q0-2.6 2.6-2.6h2.4q2.6 0 2.6 2.6v2.2z"/><path d="M8.6 16.6v-2.2q0-2.6 2.6-2.6h2.4q2.6 0 2.6 2.6v2.2z"/><circle cx="8.3" cy="8.3" r="2.4"/><path d="M4.2 17v-2.6q0-3.1 3.1-3.1h2q3.1 0 3.1 3.1v2.6z"/></g><circle cx="14.3" cy="3.8" r="2.6" fill="#c9c9c9"/><circle cx="14.3" cy="3.8" r="1" fill="#9a9a9a"/></svg>
<div class="si" style="top:461px;height:37px;"></div>
<div class="t" style="left:36.6px;top:474px;font-size:12.8px;color:#e6e6e6;letter-spacing:0.7px;transform:scaleX(0.9664);-webkit-text-stroke:0.4px #e6e6e6;">Eliminar Datos</div>
<svg class="a" style="left:9px;top:471.0px" width="18" height="18" viewBox="0 0 18 18"><circle cx="9" cy="9" r="7.8" fill="#c9c9c9"/><path d="M6 6l6 6M12 6l-6 6" stroke="#3c3c3b" stroke-width="1.8"/></svg>
<div class="si" style="top:498px;height:37px;"></div>
<div class="t" style="left:36.6px;top:511px;font-size:12.8px;color:#e6e6e6;letter-spacing:0.7px;transform:scaleX(0.9495);-webkit-text-stroke:0.4px #e6e6e6;">Análisis de Datos</div>
<svg class="a" style="left:9px;top:508.0px" width="18" height="18" viewBox="0 0 18 18"><g fill="none" stroke="#c9c9c9" stroke-width="1.5"><path d="M4.2 4.6Q9 0.8 13.6 3.4"/><path d="M15.6 6Q16.4 9 14.6 11.4"/><path d="M10.6 14.6Q12.8 13.6 14 12.3"/><path d="M7.2 14.2Q3.4 12.4 2.6 7.6"/></g><g fill="#3c3c3b" stroke="#c9c9c9" stroke-width="1.3"><circle cx="3" cy="5.9" r="1.9"/><circle cx="15" cy="4.4" r="1.9"/><circle cx="8.9" cy="14.3" r="1.9"/></g><path d="M16.6 9.6l-0.8 4.2-3.4-1.8z" fill="#c9c9c9"/></svg>
<div class="si" style="top:535px;height:37px;"></div>
<div class="t" style="left:36.6px;top:548px;font-size:12.8px;color:#e6e6e6;letter-spacing:0.7px;transform:scaleX(0.9590);-webkit-text-stroke:0.4px #e6e6e6;">Adaptar Datos</div>
<svg class="a" style="left:9px;top:545.0px" width="18" height="18" viewBox="0 0 18 18"><path d="M11.5 1.5H1.6V17.2H9.5Q13.4 17 13.6 13.2V11" fill="none" stroke="#c9c9c9" stroke-width="1.5"/><path d="M9.8 13.4q0.1 2.2 2.5 2.6" fill="none" stroke="#c9c9c9" stroke-width="1.2"/><path d="M7.4 11.6l1.2-3.2 6.9-6.9 2 2-6.9 6.9z" fill="#c9c9c9"/><path d="M3.8 10.6q1.2-1.6 2.4-0.4q-1 0.8 0.4 0.8" fill="none" stroke="#c9c9c9" stroke-width="1"/></svg>
<div class="t" style="left:3.3px;top:589px;font-size:12.4px;color:#d9726b;font-weight:bold;letter-spacing:1.0px;transform:scaleX(0.7995);">SALIDA</div>
<div class="si" style="top:605px;height:37px;"></div>
<div class="t" style="left:36.6px;top:618px;font-size:12.8px;color:#e6e6e6;letter-spacing:0.7px;transform:scaleX(0.9653);-webkit-text-stroke:0.4px #e6e6e6;">Puntos de Cronometraje</div>
<svg class="a" style="left:9px;top:615.0px" width="18" height="18" viewBox="0 0 18 18"><path d="M9 17.5l-3.8-7.5q-1.2-2-1.2-3.5 0-5 5-5t5 5q0 1.5-1.2 3.5z" fill="#c9c9c9"/><circle cx="9" cy="6.5" r="1.8" fill="#3c3c3b"/></svg>
<div class="si" style="top:642px;height:37px;"></div>
<div class="t" style="left:36.6px;top:655px;font-size:12.8px;color:#e6e6e6;letter-spacing:0.7px;transform:scaleX(0.9803);-webkit-text-stroke:0.4px #e6e6e6;">Splits</div>
<svg class="a" style="left:9px;top:652.0px" width="18" height="18" viewBox="0 0 18 18"><path d="M14 4.5a7 7 0 1 0 2 6" fill="none" stroke="#c9c9c9" stroke-width="1.5"/><path d="M16.5 10.5v2M15.5 14l-1 1.3M12.5 16.3l-1.5.5" stroke="#c9c9c9" stroke-width="1.5"/><path d="M9 4.5v4.8h3.5" fill="none" stroke="#c9c9c9" stroke-width="1.5"/><path d="M12 1.5l4 .3-1.2 3.6z" fill="#c9c9c9"/></svg>
<div class="si" style="top:679px;height:52px;"></div>
<div class="t" style="left:36.6px;top:692px;font-size:12.8px;color:#e6e6e6;letter-spacing:0.7px;transform:scaleX(0.9745);-webkit-text-stroke:0.4px #e6e6e6;">Límite de Tiempo Inicial /</div>
<div class="t" style="left:36.6px;top:708px;font-size:12.8px;color:#e6e6e6;letter-spacing:0.7px;transform:scaleX(0.9586);-webkit-text-stroke:0.4px #e6e6e6;">Tiempo de Meta</div>
<svg class="a" style="left:9px;top:696.5px" width="18" height="18" viewBox="0 0 18 18"><path d="M13 15.5a7 7 0 1 1 3-5" fill="none" stroke="#c9c9c9" stroke-width="1.5"/><path d="M9 10l3.2-3" stroke="#c9c9c9" stroke-width="1.5"/><path d="M12.5 12.5l4.5 2.3-4.5 2.3z" fill="#c9c9c9"/><path d="M3 3.5l1.5-1.5M15 3.5l-1.5-1.5" stroke="#c9c9c9" stroke-width="1.4"/></svg>
<div class="si" style="top:731px;height:37px;"></div>
<div class="t" style="left:36.6px;top:745px;font-size:12.8px;color:#e6e6e6;letter-spacing:0.7px;transform:scaleX(0.9488);-webkit-text-stroke:0.4px #e6e6e6;">Archivo de Chip</div>
<svg class="a" style="left:9px;top:741.0px" width="18" height="18" viewBox="0 0 18 18"><rect x="1" y="1.5" width="16" height="15" rx="5" fill="#c9c9c9"/><rect x="3.8" y="5" width="10.4" height="6.8" fill="#8a8a8a"/><rect x="4.8" y="6" width="8.4" height="4.8" fill="#c9c9c9"/><rect x="3.5" y="13" width="11" height="1.2" fill="#8a8a8a"/></svg>
<div class="si" style="top:768px;height:37px;"></div>
<div class="t" style="left:36.6px;top:782px;font-size:12.8px;color:#e6e6e6;letter-spacing:0.7px;transform:scaleX(0.9691);-webkit-text-stroke:0.4px #e6e6e6;">Simulación de carrera</div>
<svg class="a" style="left:9px;top:778.0px" width="18" height="18" viewBox="0 0 18 18"><g fill="none" stroke="#c9c9c9" stroke-width="1.3"><circle cx="8.5" cy="10" r="6.5"/><path d="M2 10h13M8.5 3.5q-3.5 6.5 0 13M8.5 3.5q3.5 6.5 0 13"/></g><path d="M14.5 1q2.8 0 2.8 2.7 0 1.5-2.8 4.8-2.8-3.3-2.8-4.8 0-2.7 2.8-2.7z" fill="#c9c9c9"/><path d="M1 15l7-4 3 1.5 5-3" stroke="#c9c9c9" stroke-width="1.5" fill="none"/></svg>
<div class="t" style="left:3.3px;top:823px;font-size:12.4px;color:#d9726b;font-weight:bold;letter-spacing:1.0px;transform:scaleX(0.8022);">AJUSTES</div>
</div>
<div class="a" style="left:226px;top:77px;width:1px;height:833px;background:#fafafa"></div><div class="a" style="left:227px;top:77px;width:10px;height:833px;background:#f1f1f1"></div><div class="a" style="left:228px;top:88px;width:7px;height:715px;background:#c1c1c1"></div><svg class="a" style="left:227px;top:80px" width="10" height="8"><path d="M1.5 6h7l-3.5-4z" fill="#a3a3a3"/></svg><svg class="a" style="left:227px;top:902px" width="10" height="8"><path d="M1.5 2h7l-3.5 4z" fill="#505050"/></svg>
</body></html>
